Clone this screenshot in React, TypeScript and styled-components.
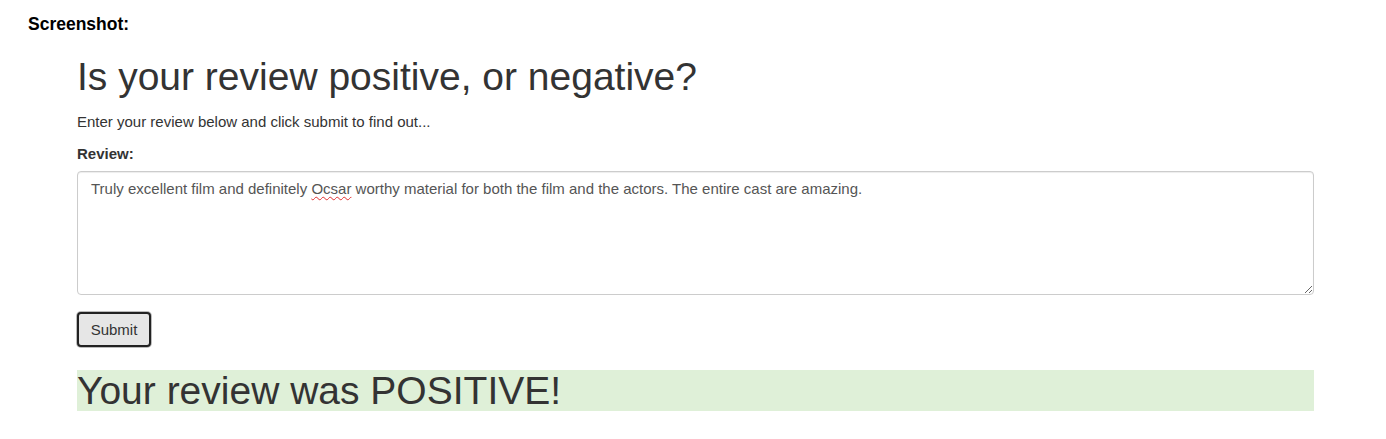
import React from "react";
import styled, { createGlobalStyle } from "styled-components";

const Global = createGlobalStyle`
  html, body { margin: 0; padding: 0; background: #fff; }
  body { font-family: "Liberation Sans", Arial, sans-serif; color: #333; }
`;

const Page = styled.div`
  padding: 14px 0 0 28px;
`;

const Caption = styled.div`
  font-weight: bold;
  font-size: 17.5px;
  color: #000;
  line-height: 20px;
`;

const Container = styled.div`
  width: 1237px;
  margin-left: 49px;
  display: flex;
  flex-direction: column;
`;

const Title = styled.h1`
  margin: 21px 0 0;
  font-size: 39px;
  font-weight: 500;
  line-height: 43px;
  color: #333;
`;

const Lead = styled.p`
  margin: 14px 0 0;
  font-size: 15px;
  line-height: 20px;
`;

const Label = styled.label`
  margin-top: 12px;
  font-size: 15px;
  font-weight: bold;
  line-height: 20px;
`;

const TextBox = styled.div`
  margin-top: 7px;
  box-sizing: border-box;
  width: 1237px;
  height: 124px;
  padding: 6px 13px;
  border: 1px solid #ccc;
  border-radius: 4px;
  box-shadow: inset 0 1px 1px rgba(0, 0, 0, 0.075);
  font-size: 15px;
  line-height: 21px;
  color: #555;
  resize: vertical;
  overflow: auto;
  outline: none;
`;

const Misspelled = styled.span`
  text-decoration: underline wavy #e03030;
  text-decoration-thickness: 1px;
  text-underline-offset: 2px;
`;

const Submit = styled.button`
  margin-top: 17px;
  align-self: flex-start;
  box-sizing: border-box;
  width: 74px;
  height: 35px;
  border: 2px solid #222;
  border-radius: 4px;
  background: #e6e6e6;
  box-shadow: 0 0 0 1px #bbb;
  font-family: "Liberation Sans", Arial, sans-serif;
  font-size: 15px;
  color: #333;
  padding: 0;
`;

const Result = styled.div`
  margin-top: 23px;
  background: #dff0d8;
  font-size: 39px;
  line-height: 41px;
  height: 41px;
  color: #333;
`;

export default function App() {
  return (
    <>
      <Global />
      <Page>
        <Caption>Screenshot:</Caption>
        <Container>
          <Title>Is your review positive, or negative?</Title>
          <Lead>Enter your review below and click submit to find out...</Lead>
          <Label htmlFor="review">Review:</Label>
          <TextBox id="review" role="textbox" aria-multiline="true" contentEditable suppressContentEditableWarning>
            Truly excellent film and definitely <Misspelled>Ocsar</Misspelled> worthy material for both the film and the actors. The entire cast are amazing.
          </TextBox>
          <Submit>Submit</Submit>
          <Result>Your review was POSITIVE!</Result>
        </Container>
      </Page>
    </>
  );
}
